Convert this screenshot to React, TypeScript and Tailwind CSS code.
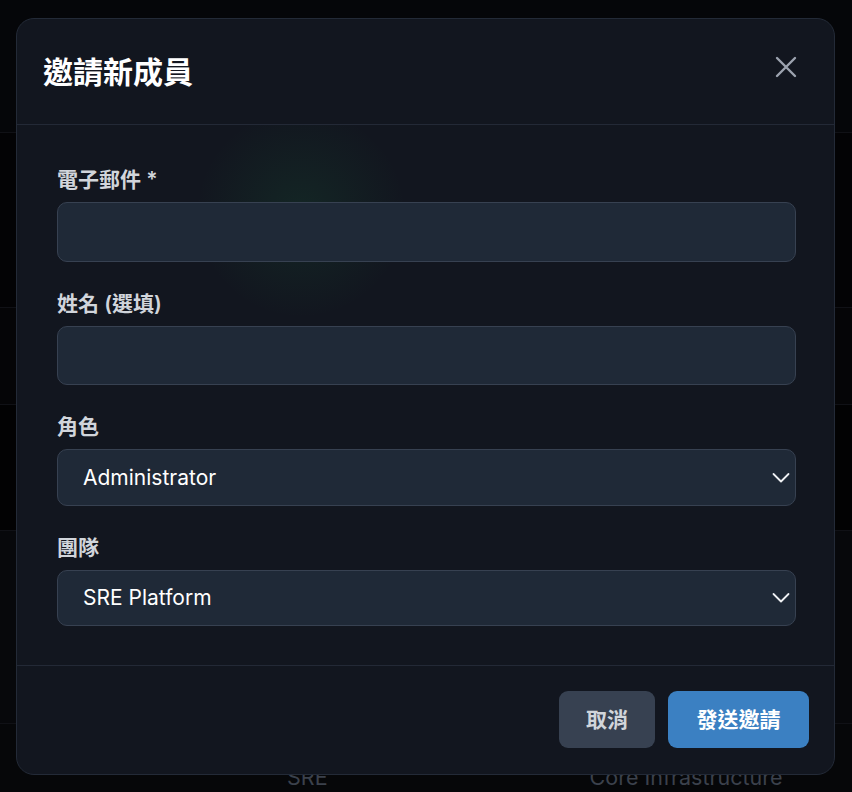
import { useState } from "react";

const FONT = "font-['Inter','Noto_Sans_CJK_TC',sans-serif]";

const ROLES = ["Administrator", "Editor", "Viewer"];
const TEAMS = ["SRE Platform", "Core Infrastructure", "Frontend"];

/** Faint table rows sitting behind the dialog. */
function BackdropRows() {
  return (
    <div className="flex h-full flex-col">
      <div className="h-[133px] shrink-0 border-b border-[#101116] bg-[#050609]" />
      <div className="h-[175px] shrink-0 border-b border-[#101116] bg-[#030305]" />
      <div className="h-[97px] shrink-0 border-b border-[#101116] bg-[#050507]" />
      <div className="h-[126px] shrink-0 border-b border-[#101116] bg-[#020203]" />
      <div className="h-[193px] shrink-0 border-b border-[#101116] bg-[#07080b]" />
      <div className="flex h-[68px] shrink-0 items-start bg-[#060709] pt-[43px] text-[21.5px] leading-none text-[#3b414c]">
        <span className="ml-[287px]">SRE</span>
        <span className="ml-[262px]">Core Infrastructure</span>
      </div>
    </div>
  );
}

function Chevron() {
  return (
    <svg
      width="18"
      height="11"
      viewBox="0 0 18 11"
      fill="none"
      className="pointer-events-none absolute right-[6px] top-1/2 -translate-y-1/2"
    >
      <path d="M1.5 1.5 9 9l7.5-7.5" stroke="#eef0f3" strokeWidth="1.8" strokeLinecap="round" strokeLinejoin="round" />
    </svg>
  );
}

function Field({ label, children }: { label: string; children: React.ReactNode }) {
  return (
    <div>
      <label className="mb-[7px] block text-[21px] font-semibold leading-[30px] text-[#d1d5db]">{label}</label>
      {children}
    </div>
  );
}

export default function App() {
  const [email, setEmail] = useState("");
  const [name, setName] = useState("");
  const [role, setRole] = useState(ROLES[0]);
  const [team, setTeam] = useState(TEAMS[0]);

  const inputCls =
    "block w-full rounded-[10px] border border-[#374151] bg-[#1f2937] px-[25px] text-[21px] text-white outline-none";

  return (
    <div className={`relative h-[792px] w-full overflow-hidden bg-[#040508] ${FONT}`}>
      <BackdropRows />

      <div className="absolute inset-0 pl-[16px] pt-[18px]">
        <div className="flex h-[757px] w-[819px] flex-col rounded-[18px] border border-[#232a37] bg-[#12161f]">
          <header className="flex h-[106px] shrink-0 items-center justify-between border-b border-[#232936] pl-[26px] pr-[37px]">
            <h2 className="text-[30px] font-bold leading-none text-white">邀請新成員</h2>
            <button className="mb-[10px] text-[#9ca3af]" aria-label="close">
              <svg width="22" height="22" viewBox="0 0 22 22" fill="none">
                <path d="M2 2l18 18M20 2 2 20" stroke="currentColor" strokeWidth="2.4" strokeLinecap="round" />
              </svg>
            </button>
          </header>

          <div className="flex shrink-0 flex-col gap-[27px] bg-[radial-gradient(circle_at_284px_88px,rgba(34,197,94,0.09),transparent_105px)] pb-[39px] pl-10 pr-[38px] pt-[40px]">
            <Field label="電子郵件 *">
              <input value={email} onChange={(e) => setEmail(e.target.value)} className={`${inputCls} h-[60px]`} />
            </Field>
            <Field label="姓名 (選填)">
              <input value={name} onChange={(e) => setName(e.target.value)} className={`${inputCls} h-[59px]`} />
            </Field>
            <Field label="角色">
              <div className="relative">
                <select
                  value={role}
                  onChange={(e) => setRole(e.target.value)}
                  className={`${inputCls} h-[57px] appearance-none`}
                >
                  {ROLES.map((r) => (
                    <option key={r}>{r}</option>
                  ))}
                </select>
                <Chevron />
              </div>
            </Field>
            <Field label="團隊">
              <div className="relative">
                <select
                  value={team}
                  onChange={(e) => setTeam(e.target.value)}
                  className={`${inputCls} h-[56px] appearance-none`}
                >
                  {TEAMS.map((t) => (
                    <option key={t}>{t}</option>
                  ))}
                </select>
                <Chevron />
              </div>
            </Field>
          </div>

          <footer className="flex flex-1 items-start justify-end gap-[13px] border-t border-[#232936] pr-[25px] pt-[25px]">
            <button className="h-[57px] w-[96px] rounded-[9px] bg-[#374151] text-[21px] font-bold text-[#d1d5db]">
              取消
            </button>
            <button className="h-[57px] w-[141px] rounded-[9px] bg-[#3b80c2] text-[21px] font-bold text-white">
              發送邀請
            </button>
          </footer>
        </div>
      </div>
    </div>
  );
}
